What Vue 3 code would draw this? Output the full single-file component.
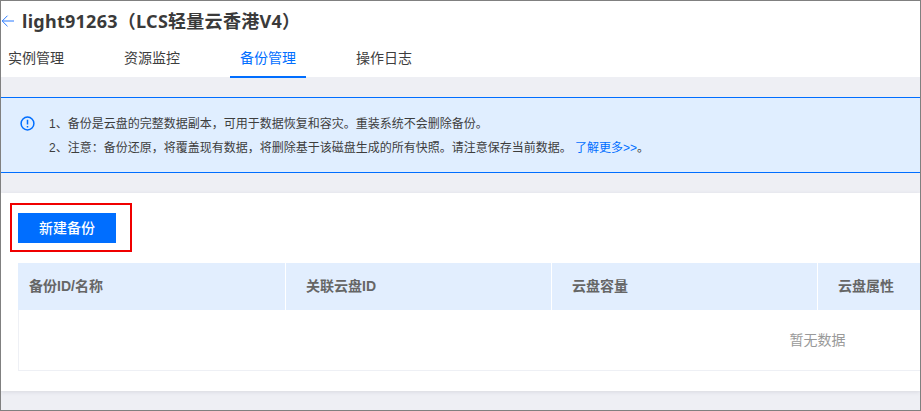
<script setup>
const tabs = [
  { label: '实例管理', active: false },
  { label: '资源监控', active: false },
  { label: '备份管理', active: true },
  { label: '操作日志', active: false },
]
const columns = ['备份ID/名称', '关联云盘ID', '云盘容量', '云盘属性']
</script>

<template>
  <div class="frame">
    <header class="header">
      <div class="title-row">
        <svg class="back" width="14" height="14" viewBox="0 0 14 14" fill="none" stroke="#2a7bff" stroke-width="1">
          <path d="M13 7H1.2M6.5 1.7 1.2 7l5.3 5.3" />
        </svg>
        <h1 class="title">light91263（LCS轻量云香港V4）</h1>
      </div>
      <nav class="tabs">
        <span v-for="t in tabs" :key="t.label" class="tab" :class="{ active: t.active }">{{ t.label }}</span>
      </nav>
    </header>

    <section class="notice">
      <svg class="info" width="15" height="15" viewBox="0 0 15 15" fill="none">
        <circle cx="7.5" cy="7.5" r="6.4" stroke="#006eff" stroke-width="1.5" />
        <path d="M7.5 3.8v4.6M7.5 9.9v1.5" stroke="#006eff" stroke-width="1.5" />
      </svg>
      <div class="notice-text">
        <p>1、备份是云盘的完整数据副本，可用于数据恢复和容灾。重装系统不会删除备份。</p>
        <p>2、注意：备份还原，将覆盖现有数据，将删除基于该磁盘生成的所有快照。请注意保存当前数据。 <a class="link">了解更多&gt;&gt;</a>。</p>
      </div>
    </section>

    <section class="card">
      <div class="highlight">
        <button class="primary">新建备份</button>
      </div>
      <div class="table">
        <div class="thead">
          <div v-for="c in columns" :key="c" class="th">{{ c }}</div>
        </div>
        <div class="empty">暂无数据</div>
      </div>
    </section>
  </div>
</template>

<style scoped>
.frame {
  box-sizing: border-box;
  width: 921px;
  height: 411px;
  border: 1px solid #808080;
  background: #eeeff4;
  overflow: hidden;
  font-family: "Liberation Sans", "Noto Sans CJK SC", sans-serif;
  color: #333;
}
.header {
  background: #fff;
  height: 76px;
}
.title-row {
  display: flex;
  align-items: center;
  height: 40px;
}
.back {
  flex: none;
  margin-right: 7px;
}
.title {
  margin: 0;
  font-family: "Noto Sans", "Noto Sans CJK SC", sans-serif;
  font-size: 18px;
  line-height: 26px;
  font-weight: 700;
  letter-spacing: 0.27px;
  color: #3a3a3a;
  white-space: nowrap;
}
.tabs {
  display: flex;
  gap: 60px;
  padding-left: 7px;
  padding-top: 3px;
  height: 33px;
}
.tab {
  position: relative;
  font-size: 14px;
  line-height: 28px;
  color: #3d3d3d;
}
.tab.active {
  color: #006eff;
}
.tab.active::after {
  content: "";
  position: absolute;
  left: -10px;
  right: -10px;
  top: 32px;
  height: 2px;
  background: #006eff;
}
.notice {
  box-sizing: border-box;
  display: flex;
  align-items: flex-start;
  margin-top: 20px;
  height: 76px;
  padding: 14px 0 0 19px;
  background: #e0eeff;
  border-top: 1px solid #006eff;
  border-bottom: 1px solid #006eff;
}
.info {
  flex: none;
  margin-top: 4px;
}
.notice-text {
  margin-left: 14px;
  font-size: 12px;
  line-height: 24px;
  color: #3d3d3d;
}
.notice-text p {
  margin: 0;
  white-space: nowrap;
}
.link {
  color: #006eff;
}
.card {
  margin-top: 20px;
  height: 198px;
  padding-top: 10px;
  box-sizing: border-box;
  background: #fff;
  box-shadow: 0 1px 4px rgba(54, 58, 80, 0.12);
  overflow: hidden;
}
.highlight {
  box-sizing: border-box;
  width: 122px;
  height: 49px;
  margin-left: 9px;
  padding: 8px 0 0 6px;
  border: 2px solid #f00000;
}
.primary {
  display: block;
  width: 98px;
  height: 30px;
  padding: 0;
  border: 0;
  background: #006eff;
  color: #fff;
  font-family: inherit;
  font-size: 14px;
  font-weight: 500;
  line-height: 30px;
  text-align: center;
}
.table {
  box-sizing: border-box;
  width: 1598px;
  height: 108px;
  margin: 11px 0 0 17px;
  border-left: 1px solid #eef0f5;
  border-bottom: 1px solid #eef0f5;
}
.thead {
  display: grid;
  grid-template-columns: 268px 266px 266px 1fr;
  height: 47px;
  margin-left: -1px;
  background: #e2eefe;
}
.th {
  box-sizing: border-box;
  padding-left: 20px;
  font-size: 14px;
  font-weight: 700;
  line-height: 47px;
  color: #666;
  border-right: 1px solid #fff;
  white-space: nowrap;
}
.th:first-child {
  padding-left: 11px;
}
.empty {
  height: 60px;
  line-height: 60px;
  text-align: center;
  font-size: 14px;
  color: #999;
}
</style>
